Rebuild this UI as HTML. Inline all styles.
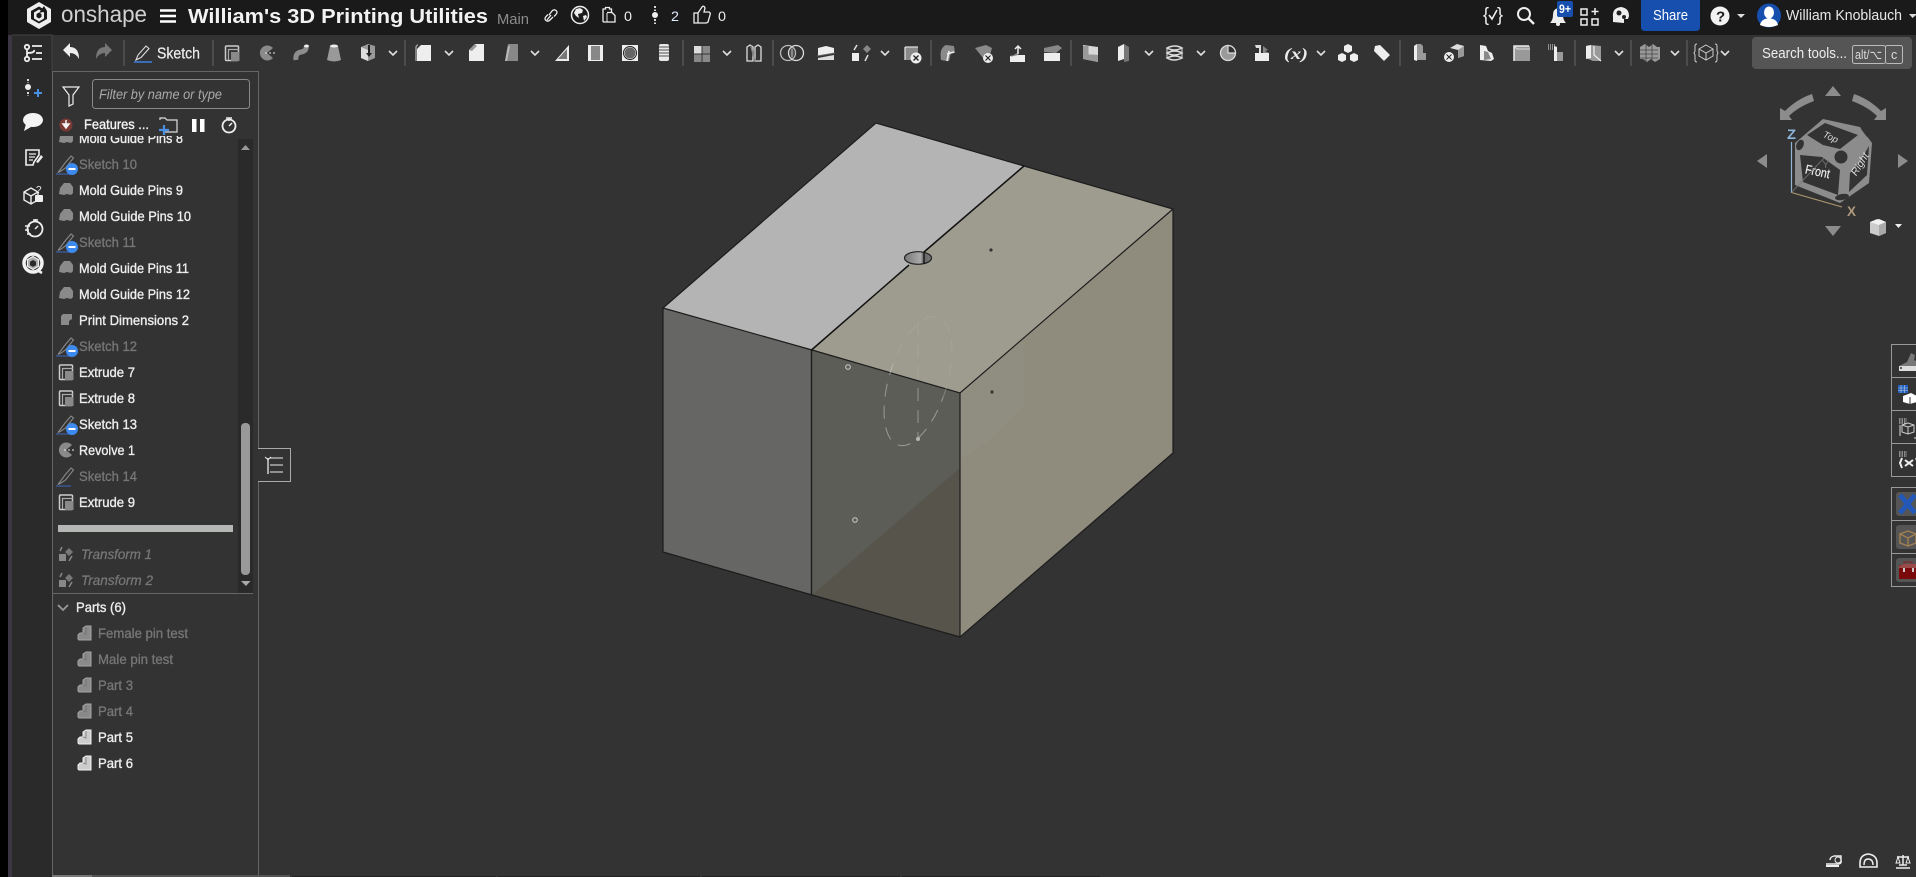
<!DOCTYPE html>
<html><head><meta charset="utf-8"><title>William's 3D Printing Utilities</title>
<style>
html,body{margin:0;padding:0;background:#333;overflow:hidden}
svg{display:block;position:absolute;left:0;top:0}
text{font-family:"Liberation Sans",sans-serif}
.r{font-size:14px;fill:#eee;stroke:#eee;stroke-width:.35}
.d{font-size:14px;fill:#777;stroke:#777;stroke-width:.3}
.i{font-size:14px;fill:#777;font-style:italic;stroke:#777;stroke-width:.25}
</style></head><body>
<svg width="1916" height="877" viewBox="0 0 1916 877" xmlns="http://www.w3.org/2000/svg">
<defs>
<g id="sk"><path d="M-8 8.500L-1-1 5-8l2.500 2L-.5 4-5 7z" fill="none" stroke="#888" stroke-width="1.100"/><path d="M-10 10H5" stroke="#3b5fa8" stroke-width="1.200"/></g>
<g id="min"><circle cx="6" cy="5" r="6" fill="#3d8bf0"/><rect x="2.500" y="4" width="7" height="2" fill="#fff"/></g>
<g id="mold"><path d="M-7 4l1-6 4-5h6l3 4 0 6-2 2-4-1-3 1z" fill="#8a8a8a"/></g>
<g id="ext"><rect x="-6.500" y="-7" width="13" height="14.500" rx="1" fill="none" stroke="#ccc" stroke-width="1.500"/><path d="M-3.500 7V-3.500H7" fill="none" stroke="#aaa" stroke-width="1.200"/><rect x="-1" y="-1" width="8.500" height="9" fill="#8a8a8a"/></g>
<g id="rev"><path d="M6-5A7.500 7.500 0 1 0 6 5L0 0z" fill="#8a8a8a"/><path d="M-2 0H9" stroke="#eee" stroke-dasharray="2 2"/></g>
<g id="tr"><rect x="-7" y="0" width="7" height="7" fill="#888"/><path d="M-6-3l2-4" stroke="#888" stroke-width="1.500"/><path d="M3-6l4 4-4 4-4-4z" fill="#777"/><path d="M6 2L3 7" stroke="#888" stroke-width="1.500"/></g>
<g id="part"><path d="M-7 2l2-2h3V-5l3-2h5V7H-6l-1-1z" fill="#8a8a8a" stroke="#a5a5a5"/><path d="M-2 0l3 1V-6" fill="none" stroke="#777"/></g>
<g id="partw"><path d="M-7 2l2-2h3V-5l3-2h5V7H-6l-1-1z" fill="#ccc" stroke="#f2f2f2"/><path d="M-2 0l3 1V-6" fill="none" stroke="#888"/></g>
<path id="ch" d="M-4-2L0 2 4-2" fill="none" stroke="#e0e0e0" stroke-width="1.600"/>
<g id="solid"><path d="M-7 8V-4l4-4H7V8z" fill="#eee"/></g>
<clipPath id="midc"><path d="M812 350L960 393V637L812 595z"/></clipPath>
<clipPath id="topc"><path d="M812 350L1023 166 1173 209 960 393z"/></clipPath>
<linearGradient id="hg" x1="0" x2="1"><stop offset="0" stop-color="#777"/><stop offset=".6" stop-color="#aaa"/><stop offset=".7" stop-color="#666"/><stop offset="1" stop-color="#777"/></linearGradient>
<clipPath id="rc"><rect x="1891" y="340" width="25" height="250"/></clipPath>
<clipPath id="lc"><rect x="53" y="136" width="185" height="456"/></clipPath>
</defs>

<!-- base -->
<rect width="1916" height="877" fill="#333"/>
<rect y="0" width="8" height="877" fill="#000"/>
<rect x="8" y="0" width="4" height="877" fill="#3c3644"/>
<rect x="12" y="35" width="40" height="842" fill="#2a2a2a"/>
<rect x="12" y="35" width="1904" height="36" fill="#333"/>
<rect x="12" y="35" width="40" height="36" fill="#2a2a2a"/>
<rect x="8" y="0" width="1908" height="35" fill="#1a1a1a"/>
<rect x="0" y="0" width="8" height="35" fill="#000"/>
<path d="M12 35H52V71" fill="none" stroke="#444"/>

<!-- header -->
<g>
<path d="M39 2l12 7v13l-12 7-12-7V9z" fill="#eee"/><path d="M39 6.500l8 4.500v8l-8 4.500-8-4.500v-8z" fill="#1a1a1a"/><path d="M39 9.500l5 3v6l-5 3-5-3v-6z" fill="#eee"/><path d="M39 12.500l2.500 1.500v3L39 18.500 36.500 17v-3z" fill="#1a1a1a"/><path d="M44 6l3 5-8 2z" fill="#1a1a1a"/>
<text x="61" y="22" font-size="23" fill="#d0d0d0" textLength="86" lengthAdjust="spacingAndGlyphs">onshape</text>
<path d="M160 10.500H176M160 16H176M160 21.500H176" stroke="#fff" stroke-width="2.600"/>
<text x="188" y="23" font-size="20" font-weight="700" fill="#f2f2f2" textLength="300" lengthAdjust="spacingAndGlyphs">William's 3D Printing Utilities</text>
<text x="497" y="24" font-size="14.500" fill="#8c8c8c" textLength="32" lengthAdjust="spacingAndGlyphs">Main</text>
<path d="M547 20l4-5M549 15l3-4q2-2 4-.5t0 4l-2 2M553 17l-3 3q-2 2-4 .5t0-4l2-2" fill="none" stroke="#eee" stroke-width="1.300"/>
<circle cx="580" cy="15" r="8.500" fill="none" stroke="#eee" stroke-width="1.500"/><path d="M576 9l4-1 3 2-1 3-4 1 1 4-3-2-2-3zM583 16l3-1 1 2-3 4z" fill="#eee"/>
<path d="M603 22V9h2.500V7.500h4V9h2v4" fill="none" stroke="#eee" stroke-width="1.300"/><path d="M607 12.500h5l3 3V22h-12" fill="none" stroke="#eee" stroke-width="1.300"/><path d="M607 13v9" stroke="#eee"/>
<text x="624" y="21" font-size="14" fill="#eee" textLength="8" lengthAdjust="spacingAndGlyphs">0</text>
<circle cx="655" cy="15" r="3" fill="#eee"/><path d="M655 6v5M655 19v5" stroke="#eee" stroke-width="1.800" stroke-dasharray="2 1.500"/>
<text x="671" y="21" font-size="14" fill="#dfeaff" textLength="8" lengthAdjust="spacingAndGlyphs">2</text>
<path d="M694 13h4l4-6q2-2 3 1l-1 4h5q2 1 1 3l-2 7q-1 1-2 1h-12zM698 13v10" fill="none" stroke="#eee" stroke-width="1.300"/>
<text x="718" y="21" font-size="14" fill="#eee" textLength="8" lengthAdjust="spacingAndGlyphs">0</text>

<text x="1483" y="21" font-size="19" fill="#eee" textLength="6" lengthAdjust="spacingAndGlyphs">{</text><text x="1497" y="21" font-size="19" fill="#eee" textLength="6" lengthAdjust="spacingAndGlyphs">}</text>
<path d="M1489 15l3 4 5-9" fill="none" stroke="#eee" stroke-width="1.600"/>
<circle cx="1524" cy="14" r="6" fill="none" stroke="#eee" stroke-width="2"/><path d="M1528 18l6 6" stroke="#eee" stroke-width="2.400"/>
<path d="M1550 23q3-3 3-8 0-6 5-7 5 1 5 7 0 5 3 8z" fill="#eee"/><circle cx="1558" cy="24" r="2" fill="#eee"/>
<rect x="1557" y="1" width="16" height="16" rx="2" fill="#164fae"/><text x="1559" y="13" font-size="11.500" font-weight="700" fill="#fff" textLength="12" lengthAdjust="spacingAndGlyphs">9+</text>
<path d="M1581 9h6v6h-6zM1581 19h6v6h-6zM1592 19h6v6h-6zM1595 8v7M1591.500 11.500h7" fill="none" stroke="#eee" stroke-width="1.500"/>
<path d="M1613 22v-5q-1-9 8-10 8 1 8 9l-1 3h-4v4z" fill="#eee"/><circle cx="1619" cy="13" r="2.500" fill="#222"/><circle cx="1624" cy="17" r="2" fill="#222"/>
<path d="M1641 0h59v27q0 4-4 4h-51q-4 0-4-4z" fill="#164fae"/>
<text x="1653" y="20" font-size="14.500" fill="#fff" textLength="35" lengthAdjust="spacingAndGlyphs">Share</text>
<circle cx="1720" cy="16" r="9.500" fill="#f2f2f2"/><text x="1716" y="21.500" font-size="15" font-weight="700" fill="#1a1a1a">?</text>
<path d="M1737 14h8l-4 4z" fill="#ddd"/>
<ellipse cx="1769" cy="15.500" rx="12" ry="12" fill="#164fae"/>
<ellipse cx="1769" cy="12.500" rx="5" ry="6" fill="#fff"/><path d="M1760 25q1-6 9-7 8 1 9 7-9 4-18 0z" fill="#fff"/>
<text x="1786" y="20" font-size="14.500" fill="#e8e8e8" textLength="116" lengthAdjust="spacingAndGlyphs">William Knoblauch</text>
<path d="M1909 14h7v1l-3.500 3z" fill="#ddd"/>
</g>

<!-- toolbar separators -->
<path d="M124 40V66M213 40V66M405 40V66M683 40V66M773 40V66M931 40V66M1071 40V66M1400 40V66M1575 40V66M1631 40V66M1687 40V66" stroke="#555" stroke-width="1.500"/>

<!-- chevrons -->
<use href="#ch" x="393" y="53"/><use href="#ch" x="449" y="53"/><use href="#ch" x="535" y="53"/><use href="#ch" x="727" y="53"/><use href="#ch" x="885" y="53"/><use href="#ch" x="1149" y="53"/><use href="#ch" x="1201" y="53"/><use href="#ch" x="1321" y="53"/><use href="#ch" x="1619" y="53"/><use href="#ch" x="1675" y="53"/><use href="#ch" x="1725" y="53"/>

<!-- toolbar icons -->
<path d="M63 50l7-7v4q9 0 9 12-3-6-9-6v4z" fill="#eee"/>
<path d="M112 50l-7-7v4q-9 0-9 12 3-6 9-6v4z" fill="#777"/>
<path d="M136 60l2-5 8-9 3 2.500-8 9z" fill="none" stroke="#ddd" stroke-width="1.100"/><path d="M134 62H152" stroke="#3d7fe0" stroke-width="1.400"/>
<text x="157" y="58.500" font-size="15.500" fill="#eee" stroke="#eee" stroke-width=".2" textLength="43" lengthAdjust="spacingAndGlyphs">Sketch</text>
<use href="#ext" x="232" y="53"/>
<use href="#rev" x="267" y="53"/>
<path d="M296 60q-1-7 5-8 6-1 5-6" fill="none" stroke="#8d8d8d" stroke-width="5"/><ellipse cx="306.500" cy="46" rx="2.500" ry="1.500" fill="#eee"/>
<path d="M330 46h8l3 14q-7 3-14 0z" fill="#999"/><ellipse cx="334" cy="46" rx="4" ry="1.500" fill="#eee"/>
<path d="M361 47l7-3 7 2v12l-7 3-7-3z" fill="#999"/><path d="M361 47l7 3v11l-7-3z" fill="#ddd"/><path d="M368 45v8h-2l3 4 3-4h-2v-8z" fill="#222"/>
<use href="#solid" x="424" y="53"/><path d="M418 45q-1 0-2 2v14" fill="none" stroke="#999" stroke-width="1.500"/>
<path d="M469 61V50l6-6h9v17z" fill="#eee"/><path d="M469 50l6-6 2 2-5 5z" fill="#999"/>
<path d="M505 61l3-17h10v17z" fill="#888"/><path d="M507 61l3-15h-2l-3 15z" fill="#bbb"/>
<path d="M555 61l14-16v16zM553 62h16" fill="#eee"/><path d="M558 59l9-10v10z" fill="#777"/>
<rect x="588" y="45" width="15" height="16" fill="#eee"/><rect x="591" y="46" width="9" height="14" fill="#888"/>
<rect x="622" y="45" width="16" height="16" fill="#eee"/><circle cx="630" cy="53" r="5.500" fill="#666"/><circle cx="630" cy="53" r="6.500" fill="none" stroke="#222"/>
<rect x="659" y="44" width="10" height="17" rx="2" fill="#e8e8e8"/><path d="M659 47H669M659 50H669M659 53H669M659 56H669" stroke="#555"/>
<rect x="694" y="46" width="7.500" height="7.500" fill="#ddd"/><rect x="702.500" y="46" width="7.500" height="7.500" fill="#888"/><rect x="694" y="54.500" width="7.500" height="7.500" fill="#888"/><rect x="702.500" y="54.500" width="7.500" height="7.500" fill="#888"/>
<path d="M747 47l3-2 3 2v14h-6zM761 47l-3-2-3 2v14h6z" fill="none" stroke="#ddd" stroke-width="1.300"/><path d="M751 46l4 15" stroke="#888" stroke-width="1.500"/>
<circle cx="788" cy="53" r="7.500" fill="none" stroke="#bbb" stroke-width="1.300"/><circle cx="796" cy="53" r="7.500" fill="none" stroke="#ddd" stroke-width="1.300"/><path d="M792 47q3 6 0 12-3-6 0-12z" fill="#888"/>
<path d="M818 48l8-2 8 2v5l-16 3z" fill="#eee"/><path d="M818 58l16-3v5h-16z" fill="#ddd"/><path d="M817 56l18-3" stroke="#666"/>
<rect x="852" y="53" width="7" height="8" fill="#eee"/><path d="M863 49l4-4 4 4-4 4z" fill="#888"/><path d="M854 50l3-5M868 55l-3 6" stroke="#ddd" stroke-width="1.500"/>
<path d="M905 47h13v13h-13z" fill="#8a8a8a"/><path d="M905 47v13M905 47h13" stroke="#ddd" stroke-width="1.300"/><circle cx="916" cy="58" r="5.500" fill="#eee"/><path d="M913.500 55.500l5 5M918.500 55.500l-5 5" stroke="#222" stroke-width="1.300"/>
<path d="M941 60q-2-12 5-15l8 1 1 7h-4l-2 8q-4 0-8-1z" fill="#8a8a8a"/><path d="M949 51l-2 10M947 54l7-2" stroke="#eee" stroke-width="1.600"/>
<path d="M975 48l11-3 6 3-2 7-7 3z" fill="#8a8a8a"/><circle cx="988" cy="58" r="5" fill="#eee"/><path d="M985.500 55.500l5 5M990.500 55.500l-5 5" stroke="#222" stroke-width="1.200"/>
<path d="M1010 56l6-1h9v7h-15z" fill="#eee"/><path d="M1010 57l8-2v-2h-1" fill="#888"/><path d="M1018 47v7M1015 49l3-3 3 3" stroke="#eee" stroke-width="1.500" fill="none"/>
<path d="M1044 48l14-3 4 3-6 5-12-1z" fill="#888"/><rect x="1044" y="53" width="16" height="8" fill="#eee"/>
<path d="M1083 45l15 2v15l-15-3z" fill="#d8d8d8"/><path d="M1089 46v8l9 1v7l-15-3V46z" fill="#999"/><path d="M1089 46v8h9" stroke="#d8d8d8" fill="none"/>
<path d="M1118 47l6-3v15l-6 2z" fill="#eee"/><path d="M1124 44l5 3v14l-5 1z" fill="#777"/>
<path d="M1167 48q8-4 15 0-8 4-15 0zM1167 53q8-4 15 0-8 4-15 0zM1167 58q8-4 15 0-8 4-15 0z" fill="none" stroke="#ddd" stroke-width="1.400"/><path d="M1167 48v10M1182 48v10" stroke="#ddd"/>
<circle cx="1228" cy="53" r="7.500" fill="#9a9a9a" stroke="#ddd" stroke-width="1.300"/><path d="M1228 53V45.500A7.500 7.500 0 0 1 1235.500 53z" fill="#333" stroke="#ddd" stroke-width="1.200"/>
<path d="M1255 53h14v8h-14z" fill="#eee"/><path d="M1255 45h6v8h-2v-5h-3z" fill="#ddd"/><path d="M1263 46l5 4-3 1 4 2h-6z" fill="#888"/>
<text x="1284" y="59" font-size="16" style="font-family:'Liberation Serif',serif" font-style="italic" font-weight="700" fill="#eee" textLength="24" lengthAdjust="spacingAndGlyphs">(x)</text>
<path d="M1348 44l4 2v5l-4 2-4-2v-5zM1342 53l4 2v5l-4 2-4-2v-5zM1354 53l4 2v5l-4 2-4-2v-5z" fill="#eee"/>
<path d="M1375 46l5-1 10 10-6 6-10-10z" fill="#eee"/>
<path d="M1414 46l3-2h4l2 2v7h3v7h-12z" fill="#999"/><path d="M1414 46l3-2v17l-3-1z" fill="#eee"/>
<path d="M1450 48l7-4 7 2v10l-6 2V50z" fill="#ddd"/><path d="M1458 50l6-4v10l-6 2z" fill="#999"/><circle cx="1449" cy="57" r="5" fill="#eee"/><path d="M1446.500 54.500l5 5M1451.500 54.500l-5 5" stroke="#222"/>
<path d="M1480 60V45l6 1 2 5 4 2 2 6-3 2z" fill="#eee"/><path d="M1484 60v-9l4 1 3 7z" fill="#888"/>
<rect x="1514" y="46" width="16" height="15" fill="#999"/><path d="M1514 61V46h15" fill="none" stroke="#eee" stroke-width="1.500"/><path d="M1514 46l3 3h13" fill="none" stroke="#ddd"/>
<path d="M1548 45h8M1548 47h8M1548 49h6" stroke="#eee" stroke-dasharray="1 1"/><path d="M1554 46l3 1v5h6v9h-9z" fill="#999"/><path d="M1554 46l3 1v14h-3z" fill="#eee"/>
<path d="M1586 46l5-1 10 1v15h-8l-7-3z" fill="#999"/><path d="M1586 46l5-1v13l-5 1z" fill="#eee"/><path d="M1594 46v9l7 6" stroke="#eee" stroke-width="1.200" fill="none"/>
<path d="M1640 47l5-3 4 3 4-3 4 3 3 0v12l-5 3-4-3-4 3-4-3-3 0z" fill="#9a9a9a"/><path d="M1640 50H1658M1640 54H1658M1640 58H1658M1646 45V61M1652 45V61" stroke="#444" stroke-width=".8"/>
<path d="M1706 45l7 4v7l-7 4-7-4v-7zM1699 49l7 4 7-4M1706 53v7" fill="none" stroke="#ccc" stroke-width="1"/><path d="M1697 44q-2 0-2 2v5l-1 2 1 2v5q0 2 2 2M1715 44q2 0 2 2v5l1 2-1 2v5q0 2-2 2" fill="none" stroke="#ccc"/>

<!-- search -->
<rect x="1752" y="37" width="160" height="32" rx="4" fill="#555"/>
<text x="1762" y="58" font-size="15" fill="#eee" textLength="85" lengthAdjust="spacingAndGlyphs">Search tools...</text>
<rect x="1852.500" y="45.500" width="33" height="18" rx="2" fill="none" stroke="#bbb"/><rect x="1885.500" y="45.500" width="17" height="18" rx="2" fill="none" stroke="#bbb"/>
<text x="1855" y="59" font-size="12.500" fill="#ddd" textLength="27" lengthAdjust="spacingAndGlyphs">alt/⌥</text>
<text x="1891" y="59" font-size="12.500" fill="#ddd">c</text>

<!-- left sidebar icons -->
<g fill="none" stroke="#eee" stroke-width="1.800">
<circle cx="27" cy="47" r="2.200"/><circle cx="27" cy="59" r="2.200"/><path d="M27 49.500V56.500M27 53q8 0 7-3"/><path d="M32 46H42M36 53H42M32 59H42"/>
</g>
<circle cx="28" cy="87" r="3" fill="#eee"/><path d="M28 79v4M28 92v4" stroke="#eee" stroke-width="1.800" stroke-dasharray="2 1.500"/><path d="M34 93h8M38 89v8" stroke="#4a90e2" stroke-width="2"/>
<ellipse cx="33" cy="120" rx="10" ry="7" fill="#f4f4f4"/><path d="M26 124l-2 7 7-4z" fill="#f4f4f4"/>
<path d="M26 150h13v5l-5 7-1 3h-7z" fill="none" stroke="#eee" stroke-width="1.600"/><path d="M29 154h7M29 157h6M29 160h4" stroke="#eee" stroke-width="1.200"/><path d="M36 162l5-7 2 2-5 6z" fill="#eee"/>
<path d="M24 192l7-4 7 4v8l-7 4-7-4zM24 192l7 4 7-4M31 196v8" fill="none" stroke="#eee" stroke-width="1.400"/><rect x="35" y="195" width="8" height="7" rx="1" fill="#eee"/><text x="36" y="193" font-size="10" fill="#eee">?</text>
<circle cx="35" cy="229" r="7.500" fill="none" stroke="#eee" stroke-width="1.800"/><path d="M33 220h5M35.500 221v-2M35 229l3-3M25 226h5M25 230h4M27 234h4" stroke="#eee" stroke-width="1.500"/>
<circle cx="33" cy="263" r="9" fill="#2a2a2a" stroke="#f2f2f2" stroke-width="3.500"/><path d="M33 256.500l5.500 3.200v6.600l-5.500 3.200-5.500-3.200v-6.600z" fill="#aaa" stroke="#eee" stroke-width="1.200"/><path d="M33 260l3 1.700v3.500l-3 1.700-3-1.700v-3.500z" fill="#2a2a2a"/><path d="M37 270l5 3" stroke="#eee" stroke-width="2.500"/>

<!-- feature panel -->
<rect x="52.500" y="71.500" width="206" height="805" fill="#333" stroke="#666"/>
<path d="M52 876H92" stroke="#777" stroke-width="2"/><path d="M92 876H290" stroke="#555" stroke-width="2"/>
<path d="M292 877H496M498 877H700M702 877H900M902 877H1100" stroke="#222" stroke-width="2"/>
<path d="M63 87h16l-6 8v9l-4 2V95z" fill="none" stroke="#eee" stroke-width="1.200"/>
<rect x="92.500" y="79.500" width="157" height="29" rx="3" fill="#333" stroke="#888"/>
<text x="99" y="99" font-size="13.500" font-style="italic" fill="#aaa" textLength="123" lengthAdjust="spacingAndGlyphs">Filter by name or type</text>
<circle cx="66" cy="125" r="6.500" fill="#7a3a34"/><path d="M66 120v5M63 124l3 4 3-4z" fill="#f4f4f4" stroke="#f4f4f4" stroke-width="1.500"/>
<text x="84" y="129" font-size="14" fill="#f4f4f4" stroke="#f4f4f4" stroke-width=".35" textLength="65" lengthAdjust="spacingAndGlyphs">Features ...</text>
<path d="M160 120v-2h5l2 2h10v12h-12" fill="none" stroke="#ddd" stroke-width="1.200"/><path d="M159 130h10M164 125v10" stroke="#4a90e2" stroke-width="2.200"/>
<rect x="192" y="119" width="4.500" height="13" fill="#fff"/><rect x="200" y="119" width="4.500" height="13" fill="#fff"/>
<circle cx="229" cy="126" r="6.500" fill="none" stroke="#eee" stroke-width="1.800"/><path d="M226 118h6M229 119v2M229 126l3-3" stroke="#eee" stroke-width="1.500"/>

<rect x="238" y="139" width="15" height="454" fill="#2a2a2a"/>
<path d="M241 150l4.500-5 4.500 5z" fill="#999"/>
<rect x="241" y="423" width="9" height="152" rx="4" fill="#999"/>
<path d="M241 581h9.500l-4.500 5z" fill="#aaa"/>

<g clip-path="url(#lc)"><use href="#mold" x="66" y="138"/><text class="r" x="79" y="143" textLength="104" lengthAdjust="spacingAndGlyphs">Mold Guide Pins 8</text></g>
<use href="#sk" x="66" y="164"/><use href="#min" x="66" y="164"/><text class="d" x="79" y="169" textLength="58" lengthAdjust="spacingAndGlyphs">Sketch 10</text>
<use href="#mold" x="66" y="190"/><text class="r" x="79" y="195" textLength="104" lengthAdjust="spacingAndGlyphs">Mold Guide Pins 9</text>
<use href="#mold" x="66" y="216"/><text class="r" x="79" y="221" textLength="112" lengthAdjust="spacingAndGlyphs">Mold Guide Pins 10</text>
<use href="#sk" x="66" y="242"/><use href="#min" x="66" y="242"/><text class="d" x="79" y="247" textLength="57" lengthAdjust="spacingAndGlyphs">Sketch 11</text>
<use href="#mold" x="66" y="268"/><text class="r" x="79" y="273" textLength="110" lengthAdjust="spacingAndGlyphs">Mold Guide Pins 11</text>
<use href="#mold" x="66" y="294"/><text class="r" x="79" y="299" textLength="111" lengthAdjust="spacingAndGlyphs">Mold Guide Pins 12</text>
<path d="M61 316l2-2h9v5l-3 2v4h-8z" fill="#8a8a8a"/><text class="r" x="79" y="325" textLength="110" lengthAdjust="spacingAndGlyphs">Print Dimensions 2</text>
<use href="#sk" x="66" y="346"/><use href="#min" x="66" y="346"/><text class="d" x="79" y="351" textLength="58" lengthAdjust="spacingAndGlyphs">Sketch 12</text>
<use href="#ext" x="66" y="372"/><text class="r" x="79" y="377" textLength="56" lengthAdjust="spacingAndGlyphs">Extrude 7</text>
<use href="#ext" x="66" y="398"/><text class="r" x="79" y="403" textLength="56" lengthAdjust="spacingAndGlyphs">Extrude 8</text>
<use href="#sk" x="66" y="424"/><use href="#min" x="66" y="424"/><text class="r" x="79" y="429" textLength="58" lengthAdjust="spacingAndGlyphs">Sketch 13</text>
<use href="#rev" x="66" y="450"/><text class="r" x="79" y="455" textLength="56" lengthAdjust="spacingAndGlyphs">Revolve 1</text>
<use href="#sk" x="66" y="476"/><text class="d" x="79" y="481" textLength="58" lengthAdjust="spacingAndGlyphs">Sketch 14</text>
<use href="#ext" x="66" y="502"/><text class="r" x="79" y="507" textLength="56" lengthAdjust="spacingAndGlyphs">Extrude 9</text>
<rect x="58" y="525" width="175" height="7" fill="#b5b7b5"/>
<use href="#tr" x="66" y="554"/><text class="i" x="81" y="559" textLength="71" lengthAdjust="spacingAndGlyphs">Transform 1</text>
<use href="#tr" x="66" y="580"/><text class="i" x="81" y="585" textLength="72" lengthAdjust="spacingAndGlyphs">Transform 2</text>
<path d="M53 593.500H253" stroke="#666"/>
<path d="M58 605l5 5 5-5" fill="none" stroke="#999" stroke-width="1.800"/>
<text class="r" x="76" y="612" textLength="50" lengthAdjust="spacingAndGlyphs">Parts (6)</text>
<use href="#part" x="85" y="633"/><text class="d" x="98" y="638" textLength="90" lengthAdjust="spacingAndGlyphs">Female pin test</text>
<use href="#part" x="85" y="659"/><text class="d" x="98" y="664" textLength="75" lengthAdjust="spacingAndGlyphs">Male pin test</text>
<use href="#part" x="85" y="685"/><text class="d" x="98" y="690" textLength="35" lengthAdjust="spacingAndGlyphs">Part 3</text>
<use href="#part" x="85" y="711"/><text class="d" x="98" y="716" textLength="35" lengthAdjust="spacingAndGlyphs">Part 4</text>
<use href="#partw" x="85" y="737"/><text class="r" x="98" y="742" textLength="35" lengthAdjust="spacingAndGlyphs">Part 5</text>
<use href="#partw" x="85" y="763"/><text class="r" x="98" y="768" textLength="35" lengthAdjust="spacingAndGlyphs">Part 6</text>

<!-- panel toggle -->
<path d="M258 448.500H290.500V481.500H258" fill="#333" stroke="#aaa"/>
<path d="M270 458H283M270 465H283M270 472H283" stroke="#eee" stroke-width="1.100"/><path d="M268 458V474" stroke="#aaa" stroke-width="2"/><path d="M265 457l3 2.500 3-2.500" fill="none" stroke="#eee"/>

<!-- model -->
<path d="M663 308L812 350V595L663 552z" fill="#666765"/>
<path d="M812 350L960 393V637L812 595z" fill="#5c5d56"/>
<path d="M812 595L960 468V637z" fill="#56544b"/>
<path d="M960 393L1173 209V453L960 637z" fill="#8f8c7e"/>
<path d="M960 393L1023 340 1025 405 990 440 960 460z" fill="#93918a" opacity=".25"/>
<path d="M663 308L876 123 1024 166 812 350z" fill="#b4b4b4"/>
<path d="M812 350L1024 166 1173 209 960 393z" fill="#9e9c8e"/>
<g fill="none" stroke="#1c1c1c" stroke-width="1.200">
<path d="M663 308L876 123 1024 166 1173 209V453L960 637 812 595 663 552z"/>
<path d="M663 308L812 350 960 393 1173 209M960 393V637"/>
<path d="M811.500 350V595" stroke-width="1.400"/>
<path d="M811.500 350L909 265M924 252L1024 166" stroke="#111" stroke-width="1.500"/>
</g>
<ellipse cx="918" cy="258" rx="13.500" ry="6.300" fill="url(#hg)" stroke="#222" stroke-width="1.200"/>
<path d="M924 252V264" stroke="#111" stroke-width="1.300"/>
<g fill="none" stroke-dasharray="13 9">
<ellipse cx="918" cy="381" rx="29" ry="67" transform="rotate(17 918 381)" stroke="#ccc" stroke-width="1" opacity=".55" clip-path="url(#midc)"/>
<path d="M918 322V439" stroke="#ccc" stroke-width="1" opacity=".5" clip-path="url(#midc)"/>
<ellipse cx="918" cy="381" rx="29" ry="67" transform="rotate(17 918 381)" stroke="#adab9f" stroke-width="1" opacity=".5" clip-path="url(#topc)"/>
<path d="M918 322V439" stroke="#adab9f" stroke-width="1" opacity=".5" clip-path="url(#topc)"/>
</g>
<circle cx="918" cy="439" r="2" fill="#b5b5b0"/>
<circle cx="991" cy="250" r="1.600" fill="#333"/><circle cx="992" cy="392" r="1.600" fill="#333"/>
<circle cx="848" cy="367" r="2.300" fill="none" stroke="#ccc"/><circle cx="855" cy="520" r="2.300" fill="none" stroke="#ccc"/>

<!-- view cube -->
<g fill="#8c8c8c">
<path d="M1833 86l8 10h-16z"/><path d="M1757 161l10-7v14z"/><path d="M1908 161l-10-7v14z"/><path d="M1825 226h16l-8 10z"/>
<path d="M1812 94q-15 5-27 17l-5-3v12h12l-3-4q9-9 25-15z"/><path d="M1854 94q15 5 27 17l5-3v12h-12l3-4q-9-9-25-15z"/>
<path d="M1823 119l37 8 12 16-3 40-29 20-45-18V143z"/>
</g>
<g fill="#333">
<path d="M1807 135l18-12 33 12-18 14-17-4z"/>
<path d="M1800 155l22 2 18 13-2 25-35-13z"/>
<path d="M1869 146l-2 29-18 17 1-19 9-10z"/>
<circle cx="1841" cy="157" r="6.500"/>
<ellipse cx="1800" cy="145" rx="3.500" ry="5.500" transform="rotate(25 1800 145)"/>
<ellipse cx="1842" cy="197" rx="7" ry="3" transform="rotate(-10 1842 197)"/>
<path d="M1815 122l5-4 1 1-5 5z"/><path d="M1862 128l6 8-1 1-6-8z"/>
</g>
<text x="1824" y="141" font-size="9.500" font-style="italic" fill="#ddd" transform="rotate(25 1833 135)">Top</text>
<text x="1805" y="176" font-size="13" fill="#eee" stroke="#eee" stroke-width=".2" transform="rotate(12 1818 172)" textLength="25" lengthAdjust="spacingAndGlyphs">Front</text>
<text x="1850" y="171" font-size="10.500" font-style="italic" fill="#ddd" transform="rotate(-58 1858 168)">Right</text>
<path d="M1791.500 142V193" stroke="#8eb4d6" stroke-width="1.200"/>
<path d="M1791.500 192.500L1842 207" stroke="#b09a70"/>
<path d="M1791.500 192.500L1824 158" stroke="#777" opacity=".8"/>
<text x="1787" y="139" font-size="14" font-weight="700" fill="#8db6da" textLength="9" lengthAdjust="spacingAndGlyphs">Z</text>
<text x="1847" y="216" font-size="14" fill="#b09a7c" font-weight="700" textLength="9" lengthAdjust="spacingAndGlyphs">X</text>
<text x="1822" y="168" font-size="11" fill="#707070">Y</text>
<path d="M1870 222l7-3 9 3v11l-7 3-9-3z" fill="#ccc"/><path d="M1870 222l9 3 7-3-7-3z" fill="#f2f2f2"/><path d="M1879 225v11l7-3v-11z" fill="#aaa"/>
<path d="M1895 224h7l-3.500 4z" fill="#eee"/>

<!-- right tool panels -->
<g clip-path="url(#rc)">
<rect x="1891.500" y="344.500" width="30" height="33" fill="#333" stroke="#999"/>
<rect x="1891.500" y="377.500" width="30" height="33" fill="#333" stroke="#999"/>
<rect x="1891.500" y="410.500" width="30" height="33" fill="#333" stroke="#999"/>
<rect x="1891.500" y="443.500" width="30" height="33" fill="#333" stroke="#999"/>
<rect x="1891.500" y="487.500" width="30" height="33" fill="#333" stroke="#999"/>
<rect x="1891.500" y="520.500" width="30" height="33" fill="#333" stroke="#999"/>
<rect x="1891.500" y="553.500" width="30" height="33" fill="#333" stroke="#999"/>
<path d="M1899 371v-5l8-4 4-9 4 2-1 5 6 3v8z" fill="#777"/><rect x="1899" y="366" width="20" height="5" fill="#ddd"/><circle cx="1901" cy="368" r="1" fill="#333"/>
<rect x="1898" y="385" width="10" height="8" fill="#2460c0"/><path d="M1898 388H1908M1898 390.500H1908M1901 385V393M1904.500 385V393" stroke="#bcd" stroke-width=".6"/><path d="M1903 396l8-3 6 3v6l-7 2-7-2z" fill="#fff"/><path d="M1910 397v7" stroke="#333"/>
<path d="M1899 419h8M1899 421h8M1899 423h8" stroke="#ddd" stroke-dasharray="1.500 1"/><path d="M1908 423l6 2v7l-6 2-6-2v-7zM1902 425l6 2 6-2M1908 427v7" fill="none" stroke="#ccc"/><path d="M1900 425v11M1914 438h2" stroke="#ddd"/>
<path d="M1899 452h8M1899 454h8M1899 456h8" stroke="#ddd" stroke-dasharray="1.500 1"/><path d="M1902 458l-2 5 2 5M1905 460l8 6M1913 460l-8 6M1916 458l2 5" fill="none" stroke="#eee" stroke-width="2"/>
<rect x="1896" y="492" width="26" height="24" rx="3" fill="#555"/>
<rect x="1896" y="525" width="26" height="24" rx="3" fill="#555"/>
<rect x="1896" y="558" width="26" height="24" rx="3" fill="#555"/>
<path d="M1900 495L1915 513M1915 495L1900 513" stroke="#2458b8" stroke-width="5"/>
<path d="M1908 531l8 3v9l-8 3-8-3v-9zM1900 534l8 4 8-4M1908 538v8" fill="none" stroke="#a08050" stroke-width="1.400"/>
<rect x="1899" y="565" width="19" height="14" fill="#7a0a0c"/><path d="M1899 566l5-2h12v4h-17z" fill="#9a4a48"/><path d="M1904 564v-2h8v2" stroke="#8a2020" fill="none"/><rect x="1903" y="568" width="2" height="4" fill="#ccc"/><rect x="1912" y="568" width="2" height="4" fill="#ccc"/>
</g>

<!-- bottom right -->
<path d="M1826 864h12q4 0 3-4v-4h-7q-4 1-4 4" fill="none" stroke="#eee" stroke-width="1.400"/><path d="M1826 865h13v2h-13z" fill="#eee"/><ellipse cx="1838" cy="860" rx="3" ry="3" fill="none" stroke="#eee"/>
<path d="M1860 867v-4q0-8 8-9 9 1 9 9v4z" fill="none" stroke="#eee" stroke-width="1.600"/><path d="M1864 865q0-6 4-6 5 0 5 6" fill="none" stroke="#eee" stroke-width="1.400"/>
<path d="M1896 868h14M1899 865h8M1903 855v10M1897 857h12" stroke="#eee" stroke-width="1.500"/><path d="M1896 863l2-6 2 6zM1906 863l2-6 2 6z" fill="none" stroke="#eee"/>
</svg>
</body></html>
